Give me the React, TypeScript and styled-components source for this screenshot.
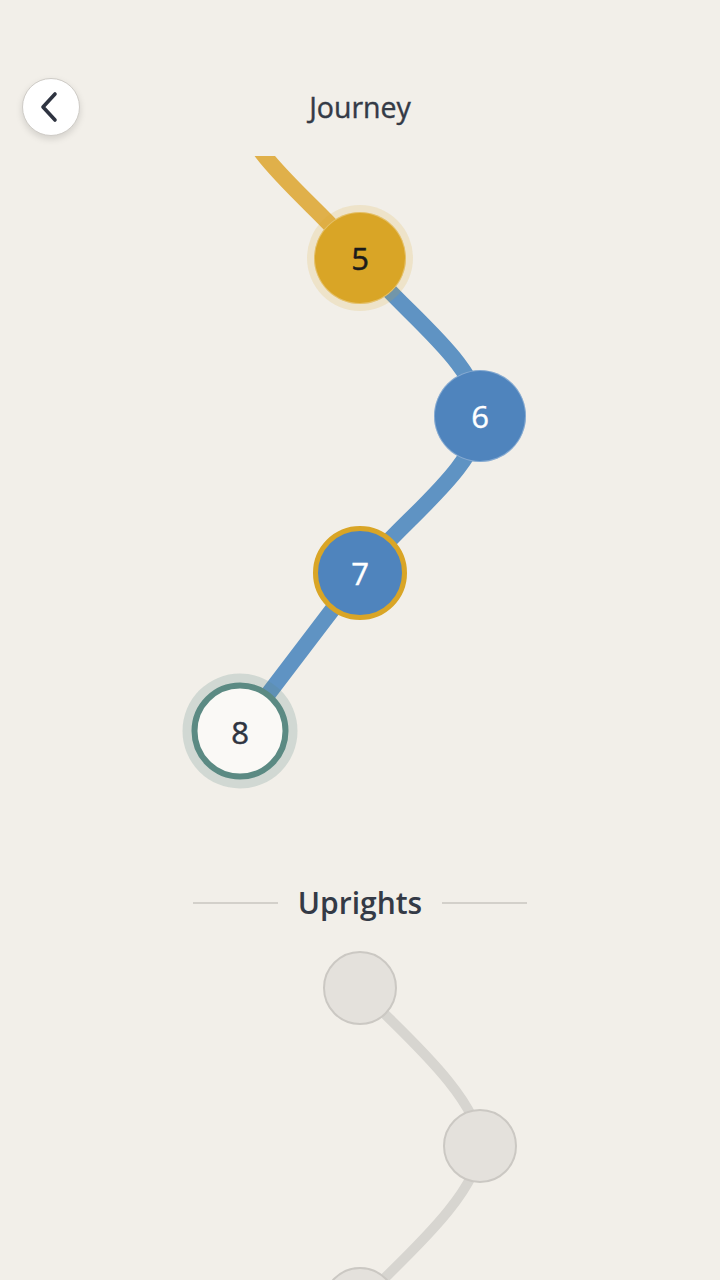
import React from "react";
import styled, { createGlobalStyle, css } from "styled-components";

const GlobalStyle = createGlobalStyle`
  html, body {
    margin: 0;
    padding: 0;
    background: #f2efe9;
    overflow: hidden;
  }
  body {
    font-family: "Open Sans", "Noto Sans", sans-serif;
    color: #343a46;
  }
`;

const Screen = styled.div`
  width: 720px;
  height: 1280px;
  overflow: hidden;
  display: flex;
  flex-direction: column;
  background: #f2efe9;
`;

const Header = styled.header`
  height: 156px;
  box-sizing: border-box;
  padding: 78px 22px 0;
  display: grid;
  grid-template-columns: 58px 1fr 58px;
  align-items: start;
  flex-shrink: 0;
`;

const BackButton = styled.button`
  width: 58px;
  height: 58px;
  border-radius: 50%;
  background: #ffffff;
  border: 1px solid #cfccc7;
  box-shadow: 0 3px 7px rgba(0, 0, 0, 0.13);
  display: flex;
  align-items: center;
  justify-content: center;
  padding: 0 2px 0 0;
  cursor: pointer;
`;

const Title = styled.h1`
  margin: 0;
  height: 58px;
  line-height: 58px;
  text-align: center;
  font-size: 28.5px;
  font-weight: 500;
  -webkit-text-stroke: 0.4px #343a46;
  color: #343a46;
`;

const Canvas = styled.div<{ $h: number }>`
  position: relative;
  width: 720px;
  height: ${(p) => p.$h}px;
  flex-shrink: 0;
  overflow: hidden;
`;

const Lines = styled.svg`
  position: absolute;
  inset: 0;
  width: 100%;
  height: 100%;
`;

type Kind = "done" | "blue" | "blueRing" | "current" | "locked";

const kinds = {
  done: css`
    width: 92px;
    height: 92px;
    background: #d9a526;
    color: #1b1b1b;
    -webkit-text-stroke: 0.5px #1b1b1b;
    box-shadow: inset 0 0 0 1px rgba(255, 255, 255, 0.3),
      0 0 0 7px rgba(217, 165, 38, 0.16);
  `,
  blue: css`
    width: 92px;
    height: 92px;
    background: #4f84bd;
    color: #ffffff;
    -webkit-text-stroke: 0.4px #ffffff;
    box-shadow: inset 0 0 0 1px rgba(255, 255, 255, 0.3);
  `,
  blueRing: css`
    width: 94px;
    height: 94px;
    background: #4f84bd;
    color: #ffffff;
    -webkit-text-stroke: 0.4px #ffffff;
    border: 5px solid #d9a526;
  `,
  current: css`
    width: 97px;
    height: 97px;
    background: #faf9f6;
    color: #2e3440;
    -webkit-text-stroke: 0.5px #2e3440;
    border: 6px solid #5b8a83;
    box-shadow: 0 0 0 9px rgba(91, 138, 131, 0.22);
  `,
  locked: css`
    width: 74px;
    height: 74px;
    background: #e4e1dc;
    border: 2px solid #cbc8c3;
  `,
};

const Node = styled.div<{ $kind: Kind }>`
  position: absolute;
  transform: translate(-50%, -50%);
  box-sizing: border-box;
  border-radius: 50%;
  display: flex;
  align-items: center;
  justify-content: center;
  font-size: 31px;
  font-weight: 500;
  ${(p) => kinds[p.$kind]}
`;

const Divider = styled.div`
  height: 40px;
  display: flex;
  align-items: center;
  justify-content: center;
  gap: 20px;
  flex-shrink: 0;
`;

const Rule = styled.span`
  width: 85px;
  height: 2px;
  background: #d3d0ca;
`;

const SectionTitle = styled.h2`
  margin: 0;
  font-size: 30px;
  font-weight: 600;
  color: #343a46;
  line-height: 40px;
`;

type Pt = { x: number; y: number };

function segment(pts: Pt[], i: number): string {
  const p0 = pts[i - 1] ?? pts[i];
  const p1 = pts[i];
  const p2 = pts[i + 1];
  const p3 = pts[i + 2] ?? pts[i + 1];
  const c1 = { x: p1.x + (p2.x - p0.x) / 6, y: p1.y + (p2.y - p0.y) / 6 };
  const c2 = { x: p2.x - (p3.x - p1.x) / 6, y: p2.y - (p3.y - p1.y) / 6 };
  return `M ${p1.x} ${p1.y} C ${c1.x} ${c1.y} ${c2.x} ${c2.y} ${p2.x} ${p2.y}`;
}

const STEP = 157.67;
const xs = [240, 360, 480, 360];
const colX = (i: number) => xs[((i % 4) + 4) % 4];

type Level = { n: number; kind: Kind; label?: string };

const journey: Level[] = [
  { n: 2, kind: "done" },
  { n: 3, kind: "done" },
  { n: 4, kind: "done" },
  { n: 5, kind: "done", label: "5" },
  { n: 6, kind: "blue", label: "6" },
  { n: 7, kind: "blueRing", label: "7" },
  { n: 8, kind: "current", label: "8" },
];

const journeyPts: Pt[] = journey.map((l) => ({
  x: colX(l.n),
  y: 102 + (l.n - 5) * STEP,
}));

const uprightPts: Pt[] = [0, 1, 2].map((i) => ({
  x: [360, 480, 360][i],
  y: 65 + i * 158,
}));

const ChevronLeft = () => (
  <svg width="20" height="32" viewBox="0 0 20 32" fill="none">
    <path
      d="M15 3 L3 16 L15 29"
      stroke="#2f3441"
      strokeWidth="3.6"
      strokeLinecap="round"
      strokeLinejoin="round"
    />
  </svg>
);

export default function App() {
  return (
    <Screen>
      <GlobalStyle />
      <Header>
        <BackButton aria-label="Back">
          <ChevronLeft />
        </BackButton>
        <Title>Journey</Title>
        <span />
      </Header>

      <Canvas $h={727}>
        <Lines viewBox="0 0 720 727">
          {journeyPts.slice(0, -1).map((_, i) => (
            <path
              key={i}
              d={segment(journeyPts, i)}
              fill="none"
              stroke={journey[i + 1].kind === "done" ? "#e0b04a" : "#5f93c3"}
              strokeWidth={16}
            />
          ))}
        </Lines>
        {journey.map((l, i) =>
          l.label ? (
            <Node
              key={l.n}
              $kind={l.kind}
              style={{ left: journeyPts[i].x, top: journeyPts[i].y }}
            >
              {l.label}
            </Node>
          ) : null
        )}
      </Canvas>

      <Divider>
        <Rule />
        <SectionTitle>Uprights</SectionTitle>
        <Rule />
      </Divider>

      <Canvas $h={460}>
        <Lines viewBox="0 0 720 460">
          {uprightPts.slice(0, -1).map((_, i) => (
            <path
              key={i}
              d={segment(uprightPts, i)}
              fill="none"
              stroke="#d7d5d0"
              strokeWidth={10}
            />
          ))}
        </Lines>
        {uprightPts.map((p, i) => (
          <Node key={i} $kind="locked" style={{ left: p.x, top: p.y }} />
        ))}
      </Canvas>
    </Screen>
  );
}
